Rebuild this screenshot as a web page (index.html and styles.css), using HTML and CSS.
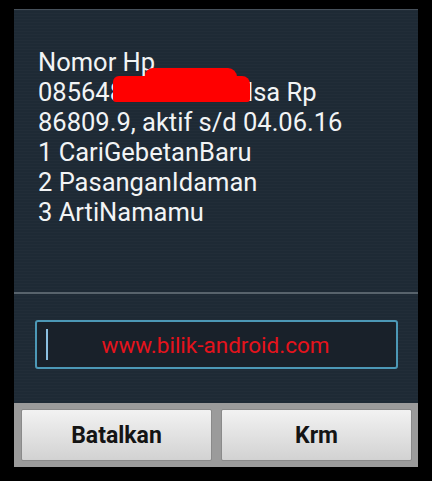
FILE: index.html
```html
<!DOCTYPE html>
<html lang="en">
<head>
    <meta charset="UTF-8">
    <meta name="viewport" content="width=device-width, initial-scale=1.0">
    <title>USSD</title>
    <link rel="stylesheet" href="styles.css">
</head>
<body>
    <div class="dialog">
        <div class="message">
            <p>Nomor Hp</p>
            <p class="masked">085648<span class="gap"></span>lsa Rp<span class="blot blot-top"></span><span class="blot blot-main"></span></p>
            <p>86809.9, aktif s/d 04.06.16</p>
            <p>1 CariGebetanBaru</p>
            <p>2 PasanganIdaman</p>
            <p>3 ArtiNamamu</p>
        </div>
        <div class="divider"></div>
        <div class="reply">
            <div class="field">
                <span class="cursor"></span>
                <span class="watermark">www.bilik-android.com</span>
            </div>
        </div>
        <div class="actions">
            <button type="button">Batalkan</button>
            <button type="button">Krm</button>
        </div>
    </div>
</body>
</html>
```

FILE: styles.css
```css
html, body {
    margin: 0;
    padding: 0;
    background-color: #000;
}
body {
    width: 432px;
    height: 481px;
    padding-top: 9px;
    box-sizing: border-box;
    font-family: Roboto, "Noto Sans", sans-serif;
}
.dialog {
    width: 404px;
    height: 458px;
    margin-left: 14px;
    display: flex;
    flex-direction: column;
    background-color: #1e2a35;
    background-image: repeating-linear-gradient(180deg, rgba(255,255,255,0.015) 0, rgba(255,255,255,0.015) 1px, transparent 1px, transparent 3px);
    border-top: 1px solid #46505a;
    box-sizing: border-box;
}
.message {
    height: 282px;
    padding: 37px 24px 0;
    box-sizing: border-box;
    color: #f2f4f5;
    font-size: 25.5px;
    line-height: 30px;
}
.message p {
    margin: 0;
    white-space: nowrap;
}
.masked {
    position: relative;
}
.gap {
    display: inline-block;
    width: 123px;
}
.blot {
    position: absolute;
    background-color: #ff0000;
}
.blot-top {
    left: 107px;
    top: -9px;
    width: 92px;
    height: 16px;
    border-radius: 8px 9px 4px 4px;
}
.blot-main {
    left: 75px;
    top: -1px;
    width: 137px;
    height: 26px;
    border-radius: 6px 8px 3px 3px;
}
.divider {
    height: 2px;
    background-color: #58636c;
}
.reply {
    flex: 1;
    padding: 26px 20px 0 21px;
}
.field {
    height: 49px;
    display: flex;
    align-items: center;
    justify-content: center;
    position: relative;
    border: 2px solid #4c98b6;
    border-radius: 3px;
    background-color: #19212a;
    box-sizing: border-box;
}
.cursor {
    position: absolute;
    left: 9px;
    top: 7px;
    width: 2px;
    height: 31px;
    background-color: #8bbfe0;
}
.watermark {
    color: #e5131c;
    font-size: 22.5px;
    margin-right: 2px;
}
.actions {
    height: 64px;
    display: grid;
    grid-template-columns: 1fr 1fr;
    gap: 9px;
    padding: 6px 6px 6px 7px;
    background-color: #9b9b9b;
    box-sizing: border-box;
}
.actions button {
    font-family: Roboto, "Noto Sans", sans-serif;
    font-weight: bold;
    font-size: 23px;
    color: #141414;
    border: 1px solid #8a8a8a;
    border-radius: 2px;
    background: linear-gradient(#f2f2f2, #d2d2d2);
    padding: 0;
}
```
